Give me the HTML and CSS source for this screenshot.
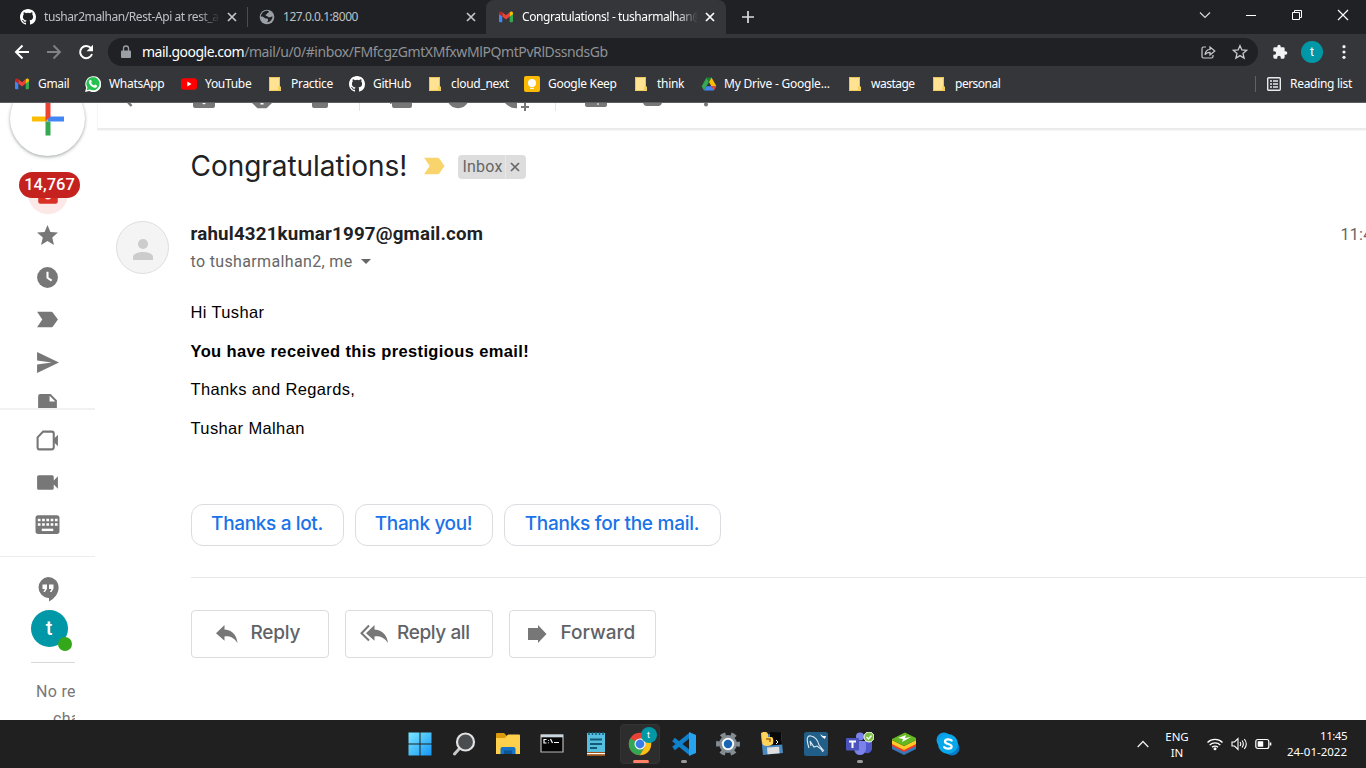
FILE: index.html
```html
<!DOCTYPE html>
<html lang="en">
<head>
<meta charset="utf-8">
<title>Congratulations! - Gmail</title>
<link rel="stylesheet" href="styles.css">
</head>
<body>
<svg class="defs" width="0" height="0">
  <defs>
    <symbol id="github" viewBox="0 0 16 16"><path fill="#fff" d="M8 0C3.58 0 0 3.58 0 8c0 3.54 2.29 6.53 5.47 7.59.4.07.55-.17.55-.38 0-.19-.01-.82-.01-1.49-2.01.37-2.53-.49-2.69-.94-.09-.23-.48-.94-.82-1.13-.28-.15-.68-.52-.01-.53.63-.01 1.08.58 1.23.82.72 1.21 1.87.87 2.33.66.07-.52.28-.87.51-1.07-1.78-.2-3.64-.89-3.64-3.95 0-.87.31-1.59.82-2.15-.08-.2-.36-1.02.08-2.12 0 0 .67-.21 2.2.82a7.6 7.6 0 0 1 4 0c1.53-1.04 2.2-.82 2.2-.82.44 1.1.16 1.92.08 2.12.51.56.82 1.27.82 2.15 0 3.07-1.87 3.75-3.65 3.95.29.25.54.73.54 1.48 0 1.07-.01 1.93-.01 2.2 0 .21.15.46.55.38A8.01 8.01 0 0 0 16 8c0-4.42-3.58-8-8-8z"/></symbol>
    <symbol id="gmail" viewBox="0 0 16 16"><path fill="#4285f4" d="M1 4v8.300q0 1 1 1h2.300V6.500z"/><path fill="#34a853" d="M15 4v8.300q0 1-1 1h-2.300V6.500z"/><path fill="#ea4335" d="M4.300 3.300 8 6.200l3.700-2.900v4.300L8 10.500 4.300 7.600z"/><path fill="#c5221f" d="M1 4.200c0-1.500 1.800-2.200 3.300-.9v4.300L1 5.200z"/><path fill="#fbbc04" d="M15 4.200c0-1.500-1.800-2.200-3.300-.9v4.300L15 5.200z"/></symbol>
    <symbol id="folder" viewBox="0 0 16 16"><path fill="#ffe292" d="M1 1h11v14H1z"/><path fill="none" stroke="#e8c35a" d="M1.500 14.500v-13h10v9"/><path fill="#f4cf60" d="M10 10.500h3V15h-3zM1 14h11v1H1z"/></symbol>
    <symbol id="close" viewBox="0 0 10 10"><path d="m1 1 8 8m0-8-8 8" fill="none" stroke="currentColor" stroke-width="1.700"/></symbol>
    <symbol id="important" viewBox="0 0 24 24"><path fill="currentColor" d="m3.500 19 4.800-7-4.800-7H15q1 0 1.700.8L21 12l-4.300 6.200q-.7.8-1.700.8z"/></symbol>
    <symbol id="clock" viewBox="0 0 24 24"><circle cx="12" cy="12" r="10" fill="currentColor"/><path d="M12 6.500v5.800l4 2.700" fill="none" stroke="#fff" stroke-width="2"/></symbol>
  </defs>
</svg>

<header class="browser">
  <div class="tabs">
    <div class="tab tab-first">
      <svg class="fav"><use href="#github"/></svg>
      <span class="tab-title fade t1">tushar2malhan/Rest-Api at rest_a</span>
      <svg class="x"><use href="#close"/></svg>
    </div>
    <div class="tab tab-second">
      <svg class="fav" viewBox="0 0 16 16"><circle cx="8" cy="8" r="7.300" fill="#9aa0a6"/><path fill="#202124" d="M9 1.800c1.500 1 .7 2-.3 2.200-.9.200-.5 1.500-1.600 1.600-1 .1-.7 1.300.4 1.300 1.700 0 1.600 1.500 2.900 1.400 1.100-.1 1.800-1.300 3.200-.8-.3 3-2.400 5.500-5.100 5.800-.4-1.300 1-1.800.6-2.900C8.700 9.200 7 10.200 5.600 9 4.200 7.800 3 7.200 1.800 7.800 2 4.300 4.800 1.400 9 1.800z"/></svg>
      <span class="tab-title t2">127.0.0.1:8000</span>
      <svg class="x"><use href="#close"/></svg>
    </div>
    <div class="tab tab-active">
      <svg class="fav"><use href="#gmail"/></svg>
      <span class="tab-title fade t3">Congratulations! - tusharmalhan@</span>
      <svg class="x"><use href="#close"/></svg>
    </div>
    <svg class="newtab" viewBox="0 0 12 12"><path d="M6 0v12M0 6h12" stroke="#dadce0" stroke-width="1.700"/></svg>
    <div class="winctl">
      <svg viewBox="0 0 12 12"><path d="m1 3.500 5 5 5-5" fill="none" stroke="#d8d8d8" stroke-width="1.200"/></svg>
      <svg viewBox="0 0 12 12"><path d="M1 6.500h10" stroke="#fff"/></svg>
      <svg viewBox="0 0 12 12"><path d="M1.500 3.500h7v7h-7zM3.500 3.500v-2h7v7h-2" fill="none" stroke="#fff"/></svg>
      <svg viewBox="0 0 12 12"><path d="m1 1 10 10m0-10L1 11" stroke="#fff" stroke-width="1.200"/></svg>
    </div>
  </div>

  <div class="toolbar">
    <svg class="nav" viewBox="0 0 16 16"><path d="M15 8H2m6.500-6.500L2 8l6.500 6.500" fill="none" stroke="#fff" stroke-width="2"/></svg>
    <svg class="nav" viewBox="0 0 16 16"><path d="M1 8h13M7.500 1.500 14 8l-6.500 6.500" fill="none" stroke="#808286" stroke-width="1.900"/></svg>
    <svg class="nav" viewBox="0 0 16 16"><path d="M13 4.200A6.100 6.100 0 1 0 14 10" fill="none" stroke="#fff" stroke-width="2"/><path fill="#fff" d="M15 .8v6.500H8.600z"/></svg>
    <div class="omnibox">
      <svg class="lock" viewBox="0 0 10 14"><path fill="#9aa0a6" d="M1 5.500h8q1 0 1 1V12q0 1-1 1H1q-1 0-1-1V6.500q0-1 1-1z"/><path d="M2.500 6V3.500a2.500 2.500 0 0 1 5 0V6" fill="none" stroke="#9aa0a6" stroke-width="1.300"/></svg>
      <span class="url"><span class="host">mail.google.com</span><span class="path">/mail/u/0/#inbox/FMfcgzGmtXMfxwMlPQmtPvRlDssndsGb</span></span>
      <svg class="share" viewBox="0 0 16 16"><g fill="none" stroke="#c8cacd" stroke-width="1.200"><path d="M6 3H3.500Q2 3 2 4.500v8Q2 14 3.500 14h8q1.500 0 1.500-1.500V11"/><path d="M5 10.800c.5-4 2.500-5.300 5-5.300V3l4.800 4L10 11V8.400c-2.500 0-4 .8-5 2.400z"/></g></svg>
      <svg class="bstar" viewBox="0 0 16 16"><path d="m8 1.700 1.900 4.300 4.700.4-3.600 3.100 1.100 4.600L8 11.600l-4.100 2.500L5 9.500 1.400 6.400 6.100 6z" fill="none" stroke="#c8cacd" stroke-width="1.300"/></svg>
    </div>
    <svg class="puzzle" viewBox="0 0 24 24"><path fill="#f1f3f4" d="M20.500 11H19V7a2 2 0 0 0-2-2h-4V3.500a2.500 2.500 0 0 0-5 0V5H4a2 2 0 0 0-2 2v3.800h1.500a2.700 2.700 0 0 1 0 5.400H2V20a2 2 0 0 0 2 2h3.800v-1.500a2.700 2.700 0 0 1 5.400 0V22H17a2 2 0 0 0 2-2v-4h1.500a2.500 2.500 0 0 0 0-5z"/></svg>
    <span class="profile">t</span>
    <svg class="kebab" viewBox="0 0 4 16"><g fill="#f1f3f4"><circle cx="2" cy="2.700" r="1.600"/><circle cx="2" cy="8" r="1.600"/><circle cx="2" cy="13.300" r="1.600"/></g></svg>
  </div>

  <nav class="bookmarks">
    <a class="wide"><svg><use href="#gmail"/></svg><span>Gmail</span></a>
    <a class="wide"><svg viewBox="0 0 16 16"><path fill="#fff" d="m0 16 1.200-4.200A8 8 0 1 1 4.200 15z"/><path fill="#25c14e" d="m1.700 14.300.8-2.800a6.600 6.600 0 1 1 2.200 2z"/><path fill="#fff" d="M5.200 3.800c.6-.3.900-.1 1.100.4l.5 1.300c.1.500-.4.800-.7 1.200.8 1.500 1.800 2.300 3.100 2.800.4-.3.600-1 1-1l1.800.9c.3.300 0 1.500-.7 2-1.700 1.200-5.100-.7-6.600-3-1.300-1.900-1.300-3.500.5-4.600z"/></svg><span>WhatsApp</span></a>
    <a class="wide"><svg viewBox="0 0 16 16"><rect y="2.300" width="16" height="11.500" rx="2.800" fill="#f00"/><path fill="#fff" d="m6.300 5.600 4.300 2.400-4.300 2.400z"/></svg><span>YouTube</span></a>
    <a><svg><use href="#folder"/></svg><span>Practice</span></a>
    <a class="wide"><svg><use href="#github"/></svg><span>GitHub</span></a>
    <a><svg><use href="#folder"/></svg><span>cloud_next</span></a>
    <a class="wide"><svg viewBox="0 0 16 16"><rect width="16" height="16" rx="2" fill="#fdba04"/><circle cx="8" cy="7" r="4" fill="#fff"/><path fill="#fff" d="M6.200 9h3.600v2H6.200zM6.200 11.700h3.600v1.300H6.200z"/></svg><span>Google Keep</span></a>
    <a><svg><use href="#folder"/></svg><span>think</span></a>
    <a><svg viewBox="0 0 16 16"><path fill="#34a853" d="M5.500 1.500 8 6l-5 8.500L.7 10.300z"/><path fill="#188038" d="M5.500 1.500h5L8 6z"/><path fill="#fbbc04" d="M10.500 1.500 15.300 10h-5L8 6z"/><path fill="#4285f4" d="M5.600 10.200h9.700l-2.500 4.300H3z"/><path fill="#ea4335" d="M10.400 10.200h4.900l-2.500 4.300z"/></svg><span class="drive">My Drive - Google...</span></a>
    <a><svg><use href="#folder"/></svg><span class="tight">wastage</span></a>
    <a><svg><use href="#folder"/></svg><span class="tight">personal</span></a>
    <a class="reading"><svg viewBox="0 0 16 16"><rect x="1.700" y="1.700" width="12.600" height="12.600" rx="1" fill="none" stroke="#e8eaed" stroke-width="1.400"/><path fill="none" stroke="#e8eaed" stroke-width="1.600" d="M4 5h2m1 0h5M4 8h2m1 0h5M4 11h2m1 0h5"/></svg><span>Reading list</span></a>
  </nav>
</header>

<div class="page">
  <aside class="side">
    <div class="side-mail">
      <div class="compose"><svg viewBox="0 0 34 34"><path fill="#fbbc04" d="M1 14.500h16v5H1z"/><path fill="#4285f4" d="M17 14.500h16v5H17z"/><path fill="#34a853" d="M14.500 19.500h5v14h-5z"/><path fill="#ea4335" d="M14.500 0h5v14.500l-5 5z"/></svg></div>
      <div class="inbox"><svg viewBox="0 0 24 24"><path fill="#d93025" d="M5 3h14q2 0 2 2v14q0 2-2 2H5q-2 0-2-2V5q0-2 2-2z"/><path fill="#fce8e6" d="M5 5h14v9h-4a3 3 0 0 1-6 0H5z"/></svg><span class="count">14,767</span></div>
      <div class="ic"><svg viewBox="0 0 24 24"><path fill="currentColor" d="m12 17.300 6.200 3.700-1.600-7L22 9.200l-7.200-.6L12 2 9.200 8.600 2 9.200 7.500 14l-1.700 7z"/></svg></div>
      <div class="ic"><svg><use href="#clock"/></svg></div>
      <div class="ic"><svg viewBox="0 0 24 24"><path fill="currentColor" d="m2 19.500 5-7.500-5-7.500h13.500q1 0 1.700.9L22 12l-4.800 6.600q-.7.900-1.700.9z"/></svg></div>
      <div class="ic"><svg viewBox="0 0 24 24"><path fill="currentColor" d="M2 22V14l14-2L2 10V2l21 10z"/></svg></div>
      <div class="ic"><svg viewBox="0 0 24 24"><path fill="currentColor" fill-rule="evenodd" d="M5 2h10l6 6v12q0 2-2 2H5q-2 0-2-2V4q0-2 2-2zm9 1.500V9h5.500z"/></svg></div>
    </div>
    <div class="side-meet">
      <div class="ic"><svg viewBox="0 0 24 24"><path fill="none" stroke="currentColor" stroke-width="2" d="M7.800 3.500H16q2 0 2 2v13q0 2-2 2H4q-1.500 0-1.500-2V9z"/><path fill="currentColor" d="m18 10.500 4-4v11l-4-4z"/></svg></div>
      <div class="ic"><svg viewBox="0 0 24 24"><path fill="currentColor" d="M3.500 5h13q1.500 0 1.500 1.500V10l4-4v12l-4-4v3.500q0 1.500-1.500 1.500h-13Q2 19 2 17.500v-11Q2 5 3.500 5z"/></svg></div>
      <div class="ic"><svg viewBox="0 0 24 24"><rect x=".5" y="3" width="23" height="18" rx="2.500" fill="currentColor"/><path stroke="#fff" stroke-width="2.400" stroke-dasharray="2.600 1.500" d="M2.700 7.700h19M2.700 12h19"/><path fill="#fff" d="M6.500 16h11v2.300h-11z"/></svg></div>
    </div>
    <div class="side-chat">
      <div class="hang"><svg viewBox="0 0 22 26"><path fill="currentColor" d="M11 1a10.500 10.500 0 0 1 10.600 10.500c0 6-4 11-9.600 14v-3.600h-1A10.500 10.500 0 0 1 11 1z"/><path fill="#fff" d="M5.500 8.500H10v4.300l-2 3.200H6.300L8 13H5.500zM12 8.500h4.500v4.300L14.500 16h-1.700l1.700-3H12z"/></svg></div>
      <div class="me">t<i></i></div>
      <p class="norec">No recent<br><span>chats</span></p>
    </div>
  </aside>

  <main class="mail">
    <div class="actions">
      <svg viewBox="0 0 22 8"><path d="m9-2 4.500 5" fill="none" stroke="#777" stroke-width="2.500"/></svg>
      <svg viewBox="0 0 22 8"><path fill="#777" d="M0 0h22v3q0 2-2 2H2Q0 5 0 3z"/><path d="m9 0 2 1.500L13 0z" fill="#fff"/></svg>
      <svg viewBox="0 0 22 8"><path fill="#777" d="M1 0h20l-5.500 5.200h-9z"/><path fill="#fff" d="M9.500 0h3v1.500h-3z"/></svg>
      <svg viewBox="0 0 22 8"><path fill="#777" d="M3 0h16v3q0 2-2 2H5Q3 5 3 3z"/></svg>
      <b></b>
      <svg viewBox="0 0 22 8"><path fill="#777" d="M2 0h20v3q0 2-2 2H4Q2 5 2 3zM0 0h1.500v1H0z"/></svg>
      <svg viewBox="0 0 22 8"><path fill="#777" d="M1.500 0h19q-3.500 5.200-9.500 5.200T1.500 0z"/></svg>
      <svg viewBox="0 0 22 8"><path fill="#777" d="M0 0h12v5.200Q5 5.500 0 0zM16 3h3V0h2v3h3v2h-3v3h-2V5h-3z"/></svg>
      <b></b>
      <svg viewBox="0 0 22 8"><path fill="#777" d="M0 0h22v2q0 2-2 2H2Q0 4 0 2z"/><path fill="#fff" d="M12 .5h2v1h-2z"/></svg>
      <svg viewBox="0 0 22 8"><path fill="#777" d="M0 0h19q-1 3-3 3H3Q1 3 0 0z"/></svg>
      <svg viewBox="0 0 22 8"><circle cx="10" cy="1.500" r="2" fill="#777"/></svg>
    </div>

    <div class="subject">
      <h1>Congratulations!</h1>
      <svg class="imp"><use href="#important"/></svg>
      <span class="label"><span>Inbox</span><svg><use href="#close"/></svg></span>
    </div>

    <div class="sender">
      <div class="avatar"><svg viewBox="0 0 24 24"><circle cx="12" cy="7" r="5" fill="#ccc"/><path fill="#ccc" d="M2 23v-3c0-3.500 6-5 10-5s10 1.500 10 5v3z"/></svg></div>
      <div class="who">
        <strong>rahul4321kumar1997@gmail.com</strong>
        <div class="to"><span>to tusharmalhan2, me</span><i></i></div>
      </div>
      <span class="time">11:45</span>
    </div>

    <article class="body">
      <p>Hi Tushar</p>
      <p class="strong">You have received this prestigious email!</p>
      <p>Thanks and Regards,</p>
      <p>Tushar Malhan</p>
    </article>

    <div class="chips">
      <button class="c1">Thanks a lot.</button>
      <button class="c2">Thank you!</button>
      <button class="c3">Thanks for the mail.</button>
    </div>

    <div class="replies">
      <button class="r1"><svg viewBox="0 0 24 20"><path fill="currentColor" d="M9.500 5.500V1L1 9.200l8.500 7.600v-4.400c5.500-.4 9.300 1.200 13 6.600-.6-6-3.700-13-13-13.500z"/></svg><span>Reply</span></button>
      <button class="r2"><svg viewBox="0 0 30 20"><path fill="currentColor" d="M15.500 5.500V1L7 9.200l8.500 7.600v-4.400c5.500-.4 9.800 1.200 13.500 6.600-.6-6-4.200-13-13.500-13.500z"/><path d="M10 1.500 2.500 9.200l7.500 7.300" fill="none" stroke="currentColor" stroke-width="2"/></svg><span>Reply all</span></button>
      <button class="r3"><svg viewBox="0 0 22 20"><path fill="currentColor" d="M2 4h10V1l8.500 9-8.500 9v-3H2z"/></svg><span>Forward</span></button>
    </div>
  </main>
</div>

<footer class="taskbar">
  <div class="apps">
    <div><svg viewBox="0 0 24 24"><defs><linearGradient id="win" x2="1" y2="1"><stop stop-color="#7ce8ff"/><stop offset="1" stop-color="#1595f5"/></linearGradient></defs><path fill="url(#win)" d="M.5.500h11v11H.5zM12.500.5h11v11h-11zM.5 12.500h11v11H.5zM12.500 12.500h11v11h-11z"/></svg></div>
    <div><svg viewBox="0 0 24 24"><path d="M7.500 16.500 2.500 22" stroke="#c9c9c9" stroke-width="3" stroke-linecap="round"/><circle cx="13.500" cy="10" r="8.500" fill="#4a4d50" stroke="#e2e2e2" stroke-width="2.200"/></svg></div>
    <div><svg viewBox="0 0 24 24"><path fill="#dd9a0a" d="M0 2q0-1 1-1h7l3 3v5H0z"/><path fill="#ffd04c" d="M0 6h9l3-3.500h11q1 0 1 1V22H0z"/><path fill="#1572c4" d="M4.500 22v-5q0-2 2-2h11q2 0 2 2v5z"/><path fill="#0b5496" d="M8 18.500h8V22H8z"/></svg></div>
    <div><svg viewBox="0 0 24 24"><path fill="#050505" stroke="#b9b9b9" stroke-width="1.200" d="M1 3h22v17H1z"/><path fill="#c9d5df" d="M1 2.500h22v2.800H1z"/><path fill="none" stroke="#fff" stroke-width="1.200" d="M6.500 7.500H4v3.500h2.500M8.500 8v.8m0 1.700v.8M10.500 7l2 4M14 10.500h5"/></svg></div>
    <div><svg viewBox="0 0 24 24"><path fill="#56bfe0" d="M3 1h18v19H3z"/><path fill="#9b5218" d="M3 20h18v4H3z"/><path fill="#fff" d="M3 21h18v1.200H3z"/><path stroke="#125a75" stroke-width="1.800" d="M6 7.500h12M6 12h12M6 16h7"/><path stroke="#12607c" stroke-width="1.500" d="M5 0v3m3.500-3v3M12 0v3m3.500-3v3M19 0v3"/></svg></div>
    <div class="on"><svg viewBox="0 0 24 24"><circle cx="12" cy="12" r="11.200" fill="#e94235"/><path fill="#33a853" d="M2.200 6.500A11.200 11.200 0 0 0 12 23.200l5-9z"/><path fill="#fbc116" d="M12 23.200A11.200 11.200 0 0 0 21.800 6.500H12l5 8z"/><circle cx="12" cy="12" r="5.500" fill="#fff"/><circle cx="12" cy="12" r="4.400" fill="#3b7de8"/></svg><em>t</em><u></u></div>
    <div><svg viewBox="0 0 24 24"><path fill="none" stroke="#1080cc" stroke-width="4.200" d="M1.500 7.500 18 21M1.500 16.500 18 3"/><path fill="#27a2ee" d="m17 0 7 3v18l-7 3z"/></svg><u class="idle"></u></div>
    <div><svg viewBox="0 0 24 24"><circle cx="12" cy="12" r="9" fill="#858d94"/><circle cx="12" cy="12" r="10.200" fill="none" stroke="#858d94" stroke-width="3.500" stroke-dasharray="5.200 5.480" stroke-dashoffset="2.600"/><circle cx="12" cy="12" r="5.200" fill="#1765b3" stroke="#f4f6f8" stroke-width="2"/></svg></div>
    <div><svg viewBox="0 0 24 24"><path fill="#4a89bd" d="m1 3 20-2 2 20-20 2z"/><path fill="#080808" d="m10 0 11 .5 1 12-12 1z"/><path fill="#ffd35a" d="M1 1q5-3 7 1v3h4q2 1 1 7-2 2-6 2-5 0-5-4z"/><path d="M6 7h4v3" fill="none" stroke="#a26a13" stroke-width="1.500"/><path fill="#dedede" d="m7 15.500 12-.8.500 6.500-12 1z"/><path fill="none" stroke="#fff" d="m16 8 2 2-2 2"/></svg></div>
    <div><svg viewBox="0 0 24 24"><rect width="24" height="24" rx="2.500" fill="#225f88"/><path d="M5 16C2 7 3 3 7 4c5 1 7 5 8 9l5 6M7 14 6 9l4 6 3-1 4 3 2 3" fill="none" stroke="#dceaf2" stroke-width="1.100"/><path fill="#fff" d="m16 2 2 3 3 2 1-3-3 0z"/></svg></div>
    <div><svg class="teams" viewBox="0 0 28 24"><circle cx="14" cy="4.500" r="4" fill="#7b83eb"/><circle cx="22" cy="6" r="3" fill="#5059c9"/><path fill="#5059c9" d="M17 9h9v8q-1 5-7 4z"/><path fill="#7b83eb" d="M8 9h12v8q-1 6-6 6-5 0-6-6z"/><rect x="0" y="6" width="13" height="12.500" rx="1" fill="#4b53bc"/><path stroke="#fff" stroke-width="2" d="M3 9.500h7M6.500 9.500V16"/><circle cx="23" cy="5" r="5" fill="#7bc043" stroke="#fff"/><path d="m20.500 5 2 2 3-3.500" fill="none" stroke="#fff" stroke-width="1.400"/></svg><u class="idle"></u></div>
    <div><svg viewBox="0 0 24 24"><path fill="#3578b9" d="m0 12 12 6 12-6v5l-12 6-12-6z"/><path fill="#f33b25" d="m0 10 12 6 12-6v4l-12 6-12-6z"/><path fill="#ffc927" d="m0 8 12 6 12-6v4l-12 6-12-6z"/><path fill="#66b820" d="M0 7 13 .5 24 6v2l-12 6L0 8z"/><path fill="#fff" d="m6 6 8-3-1 3 6-1-9 5 1-3z"/></svg></div>
    <div><svg viewBox="0 0 24 24"><circle cx="8" cy="8" r="7.500" fill="#0a9de5"/><circle cx="16" cy="16" r="7.500" fill="#0878c8"/><circle cx="12" cy="12" r="10" fill="#09a8ea"/><path d="M15.600 8.600C14 6.800 9 7 9 9.700c0 2.800 6.600 1.800 6.600 4.700 0 2.800-5.600 3-7.400.7" fill="none" stroke="#fff" stroke-width="2.300" stroke-linecap="round"/></svg></div>
  </div>
  <div class="tray">
    <svg class="up" viewBox="0 0 12 8"><path d="m.7 7 5.300-5.500L11.300 7" fill="none" stroke="#eee" stroke-width="1.300"/></svg>
    <div class="lang">ENG<br>IN</div>
    <svg class="wifi" viewBox="0 0 16 14"><g fill="none" stroke="#fff" stroke-width="1.300"><path d="M.5 5.500a10.600 10.600 0 0 1 15 0M2.700 8a7.500 7.500 0 0 1 10.600 0M5 10.300a4.200 4.200 0 0 1 6 0"/></g><circle cx="8" cy="11.800" r="1.500" fill="#fff"/></svg>
    <svg class="vol" viewBox="0 0 17 14"><g fill="none" stroke="#fff" stroke-width="1.100"><path d="M1 5h2.500L7 1.500v11L3.500 9H1zM9 5q1.500 2 0 4M11 3.500q2.700 3.500 0 7M13.300 2q4 5 0 10"/></g></svg>
    <svg class="bat" viewBox="0 0 17 12"><rect x=".8" y="1.500" width="13" height="9" rx="2" fill="none" stroke="#fff" stroke-width="1.200"/><path fill="#fff" d="M2.700 3.300h5.500v5.400H2.700zM14.700 4.500h1.600v3h-1.600z"/></svg>
    <div class="clock"><span class="hour">11:45</span><span class="date">24-01-2022</span></div>
  </div>
</footer>
</body>
</html>
```
FILE: styles.css
```css
* { box-sizing: border-box; }
body { margin: 0; width: 1366px; height: 768px; overflow: hidden; background: #fff; display: flex; flex-direction: column; font-family: "Noto Sans", "Open Sans", sans-serif; }
.defs { position: absolute; }
svg { display: block; flex: none; }
p, h1 { margin: 0; }
button { background: #fff; margin: 0; }

/* Browser chrome */
.browser { flex: none; height: 103px; background: #35363a; color: #fff; border-bottom: 1px solid #5d5e61; }
.tabs { height: 34px; background: #202124; display: flex; align-items: center; }
.tab { display: flex; align-items: center; height: 34px; }
.tab-first { width: 247px; padding-left: 20px; }
.tab-second { width: 239px; padding-left: 12px; background: linear-gradient(#4b4c4f, #4b4c4f) 0 50% / 1px 20px no-repeat; }
.tab-active { width: 240px; padding-left: 12px; background: #35363a; border-radius: 8px 8px 0 0; }
.fav { width: 16px; height: 16px; }
.tab-title { font-size: 12px; white-space: nowrap; overflow: hidden; margin-left: 8px; width: 176px; color: #bdc1c6; line-height: 20px; }
.fade { -webkit-mask-image: linear-gradient(90deg, #000 88%, transparent); mask-image: linear-gradient(90deg, #000 88%, transparent); }
.tab-active .tab-title { color: #fff; }
.x { width: 10px; height: 10px; margin-left: 7px; color: #c4c7ca; }
.tab-active .x { color: #fff; }
.t1 { letter-spacing: -.41px; }
.t2 { letter-spacing: -.47px; }
.t3 { letter-spacing: -.41px; }
.newtab { width: 12px; height: 12px; margin-left: 16px; }
.winctl { margin-left: auto; display: flex; gap: 34px; padding: 0 17px 5px 0; }
.winctl svg { width: 12px; height: 12px; }

.toolbar { height: 36px; display: flex; align-items: center; padding-left: 14px; }
.nav { width: 16px; height: 16px; margin-right: 16px; }
.omnibox { width: 1150px; height: 28px; border-radius: 14px; background: #202124; display: flex; align-items: center; padding-left: 13px; margin-left: -2px; }
.lock { width: 10px; height: 14px; margin-right: 11px; }
.url { font-size: 14px; width: 1058px; white-space: nowrap; color: #8f9296; margin-top: -1px; }
.host { color: #fff; letter-spacing: -.5px; }
.path { letter-spacing: -.41px; }
.share { width: 16px; height: 16px; margin-right: 16px; }
.bstar { width: 16px; height: 16px; }
.puzzle { width: 16px; height: 16px; margin-left: 14px; }
.profile { width: 22px; height: 22px; border-radius: 50%; background: #0097a7; font: 12px/22px Roboto, sans-serif; text-align: center; margin-left: 13px; }
.kebab { width: 4px; height: 16px; margin-left: 19px; }

.bookmarks { height: 32px; padding: 0 0 4px 14px; display: grid; grid-template-columns: 71px 96px 87px 81px 79px 96px 110px 67px 147px 84px 323px 1fr; align-items: center; }
.bookmarks a { display: flex; align-items: center; gap: 7px; font-size: 12px; line-height: 20px; white-space: nowrap; letter-spacing: -.3px; }
.bookmarks .wide { gap: 8px; }
.bookmarks .drive { letter-spacing: -.22px; }
.bookmarks .tight { letter-spacing: -.5px; }
.bookmarks svg { width: 16px; height: 16px; }
.bookmarks .reading { border-left: 1px solid #5f6368; padding-left: 10px; height: 16px; gap: 8px; }

/* Gmail page */
.page { height: 617px; display: flex; overflow: hidden; background: #fff; color: #777; }
.side { width: 95px; flex: none; color: #777; }
.side-mail { height: 307px; overflow: hidden; border-bottom: 2px solid #f1f1f1; }
.compose { width: 75px; height: 75px; border-radius: 50%; margin: -22px 0 0 10px; background: #fff; box-shadow: 0 1px 3px rgba(60,64,67,.4), 0 2px 4px rgba(60,64,67,.1); display: grid; place-items: center; }
.compose svg { width: 34px; height: 34px; }
.inbox { position: relative; width: 40px; height: 40px; border-radius: 50%; background: #fce8e6; margin: 18px 0 0 28px; display: grid; place-items: center; }
.inbox svg { width: 26px; height: 26px; }
.count { position: absolute; left: -9px; top: -2px; width: 61px; height: 26px; border-radius: 13px; background: #c5221f; color: #fff; font: 500 16.500px/25px Roboto, sans-serif; text-align: center; }
.ic { height: 42.300px; display: grid; place-items: center; }
.ic svg { width: 25px; height: 25px; }
.side-meet { height: 147px; padding-top: 9px; border-bottom: 1px solid #ececec; }
.hang { padding: 19px 0 0 37px; }
.hang svg { width: 22px; height: 26px; }
.me { position: relative; width: 37px; height: 37px; border-radius: 50%; background: #0097a7; color: #fff; font: 500 20px/36px Roboto, sans-serif; text-align: center; margin: 8px 0 0 30.500px; }
.me i { position: absolute; left: 27.500px; top: 27px; width: 14px; height: 14px; border-radius: 50%; background: #34a81b; }
.norec { width: 44px; margin: 15px 0 0 31px; padding: 15px 0 0 5px; border-top: 1px solid #d8d8d8; overflow: hidden; white-space: nowrap; font: 16px/27px Roboto, sans-serif; letter-spacing: .3px; color: #777; }
.norec span { margin-left: 17px; }

.mail { flex: 1; min-width: 0; overflow: hidden; font-family: Roboto, sans-serif; }
.actions { height: 27px; margin-left: 2px; border-bottom: 2px solid #ebebeb; border-left: 1px solid #f5f5f5; box-shadow: 0 1px 1px rgba(0,0,0,.03); display: grid; grid-template-columns: 95px 58px 58px 50px 31px 57px 58px 50px 30px 58px 53px 22px; }
.actions svg { width: 22px; height: 8px; overflow: visible; }
.actions svg:first-child { margin-left: 20px; }
.actions b { width: 1px; height: 8px; background: #e4e4e4; }
.subject { height: 71px; padding-left: 95.500px; display: flex; align-items: center; }
h1 { font: 400 28px/40px Inter, sans-serif; letter-spacing: -.05px; color: #202124; width: 229px; }
.imp { width: 28px; height: 28px; color: #f9d46c; margin-top: 1px; }
.label { margin-left: 10px; margin-top: 2px; width: 68px; height: 24px; border-radius: 4px; background: #ddd; color: #666; font-size: 16px; letter-spacing: .2px; display: flex; align-items: center; padding-left: 5px; }
.label span { width: 43px; height: 24px; line-height: 24px; border-right: 1px solid #e8e8e8; }
.label svg { width: 10px; height: 10px; margin-left: 4px; }
.sender { height: 92px; padding: 1px 0 0 21px; display: flex; align-items: center; }
.avatar { width: 53px; height: 53px; flex: none; border-radius: 50%; background: #f4f4f4; border: 1px solid #dedede; display: grid; place-items: center; }
.avatar svg { width: 24px; height: 24px; margin-top: 2px; }
.who { width: 1150px; margin-left: 21.500px; flex: none; }
.who strong { display: block; font-size: 18.700px; line-height: 28px; color: #202124; letter-spacing: .2px; }
.to { display: flex; align-items: center; font-size: 16px; line-height: 28px; color: #666; letter-spacing: .35px; }
.to i { border: 5px solid transparent; border-top-color: #666; border-bottom: 0; margin-left: 8px; }
.time { font-size: 16px; letter-spacing: .3px; color: #666; margin-top: -26px; white-space: nowrap; }
.body { height: 211px; padding-left: 95.500px; font: 16.500px/38.600px "Liberation Sans", Arial, sans-serif; letter-spacing: .37px; color: #000; }
.body .strong { font-weight: bold; }
.chips { margin-left: 95.500px; height: 74px; display: flex; gap: 11px; border-bottom: 1px solid #e8e8e8; }
.chips button { height: 42px; border: 1px solid #dadce0; border-radius: 12px; color: #1a73e8; font: 500 19px/37px Inter, sans-serif; letter-spacing: -.35px; padding: 0 0 3px; white-space: nowrap; }
.chips .c1 { width: 153px; }
.chips .c2 { width: 138px; }
.chips .c3 { width: 217px; letter-spacing: -.25px; }
.replies { margin: 32px 0 0 95.500px; display: flex; gap: 16px; }
.replies button { height: 48px; border: 1px solid #dadce0; border-radius: 4px; color: #5f6368; font: 500 19px/40px Inter, sans-serif; letter-spacing: -.2px; display: flex; align-items: center; padding: 0; white-space: nowrap; }
.replies span { margin-top: -2px; }
.replies svg { color: #777; height: 20px; }
.r1 { width: 138px; }
.r2 { width: 148px; }
.r3 { width: 147px; }
.r1 svg { width: 24px; margin: 0 12px 0 23px; }
.r2 svg { width: 30px; margin: 0 8px 0 13.500px; }
.r2 span { letter-spacing: -.4px; }
.r3 svg { width: 22px; margin: 0 13px 0 16px; }
.r3 span { letter-spacing: 0; }

/* Taskbar */
.taskbar { flex: none; height: 48px; background: #202020; color: #fff; display: flex; align-items: center; padding-left: 397.500px; }
.apps { display: flex; width: 739.500px; flex: none; }
.apps div { position: relative; width: 44px; height: 48px; display: grid; place-items: center; flex: none; }
.apps svg { width: 24px; height: 24px; }
.apps .teams { width: 28px; }
.apps .on { width: 40px; height: 40px; margin: 4px 2px; border-radius: 4px; background: #2d2d2d; border: 1px solid #343434; }
.on em { position: absolute; right: 2px; top: 2px; width: 16px; height: 16px; border-radius: 50%; background: #0097a7; font: 9px/16px Roboto, sans-serif; text-align: center; }
.apps u { position: absolute; left: 12px; bottom: 0; width: 16px; height: 3px; border-radius: 2px; background: #ff8266; }
.apps .idle { left: 19px; bottom: 5px; width: 6px; background: #9a9a9a; }
.tray { display: flex; align-items: center; font-size: 11.500px; line-height: 16px; }
.up { width: 12px; height: 8px; }
.lang { width: 32px; text-align: center; margin: 2px 14px 0 12px; }
.wifi { width: 16px; height: 14px; }
.vol { width: 17px; height: 14px; margin-left: 8px; }
.bat { width: 17px; height: 12px; margin-left: 7px; }
.tray .clock { width: 75px; display: flex; flex-direction: column; align-items: flex-end; white-space: nowrap; }
.tray .hour { letter-spacing: -.5px; }
```
